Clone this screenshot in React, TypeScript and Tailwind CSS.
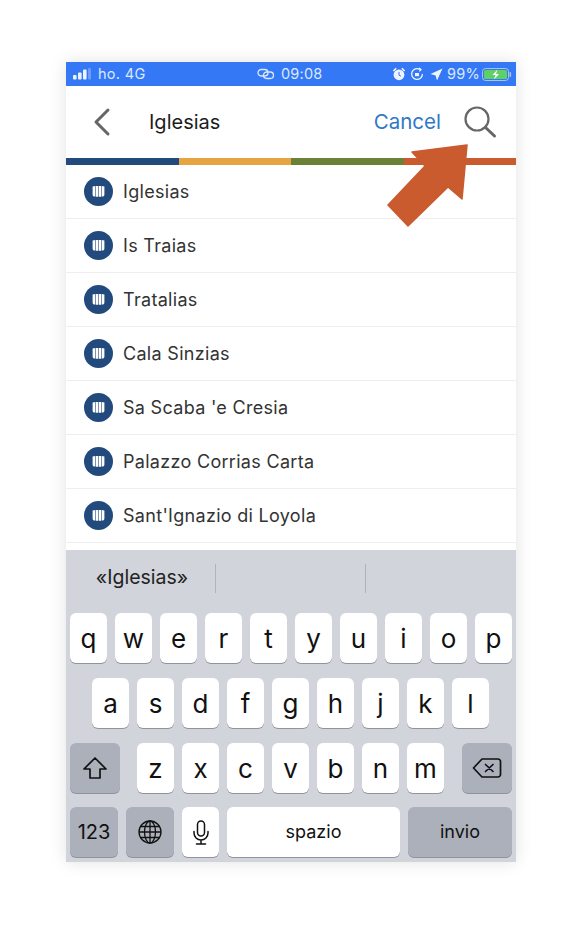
import type { ReactNode } from "react";

const places = [
  "Iglesias",
  "Is Traias",
  "Tratalias",
  "Cala Sinzias",
  "Sa Scaba 'e Cresia",
  "Palazzo Corrias Carta",
  "Sant'Ignazio di Loyola",
];

const keyFont = "font-['Inter','Liberation_Sans',sans-serif]";

const PlaceIcon = () => (
  <svg width="29" height="29" viewBox="0 0 29 29" className="shrink-0">
    <circle cx="14.5" cy="14.5" r="14.5" fill="#234a7c" />
    <path
      d="M8.6 9.6c.8-.3 1.7-.5 2.6-.6v10.6c-1.5 0-2.6-.7-2.6-2.2zM11.8 9h2.4v10.8h-2.4zM14.8 9h2.4v10.8h-2.4zM17.8 9c.9.1 1.8.3 2.6.6v7.8c0 1.5-1.1 2.2-2.6 2.2z"
      fill="#fff"
    />
  </svg>
);

const Key = ({
  label,
  className = "w-[37px] bg-white",
  children,
}: {
  label?: string;
  className?: string;
  children?: ReactNode;
}) => (
  <div
    className={`h-[50px] shrink-0 rounded-[6px] shadow-[0_1px_0_#8f949c] flex items-center justify-center text-[26px] text-[#111] ${keyFont} ${className}`}
  >
    {label}
    {children}
  </div>
);

const StatusBar = () => (
  <div className="h-6 bg-[#3478f6] flex items-center pl-[7px] text-[14.5px] text-[#dce8fd] font-['Inter','Liberation_Sans',sans-serif]">
    <svg width="20" height="12" viewBox="0 0 20 12" fill="#eef4ff">
      <rect x="0" y="7" width="3.6" height="4.5" rx="1" />
      <rect x="5" y="4.5" width="3.6" height="7" rx="1" />
      <rect x="10" y="1.5" width="3.6" height="10" rx="1" />
      <rect x="15" y="0" width="3" height="11.5" rx="1" opacity=".3" />
    </svg>
    <span className="ml-[5px] w-[50px] tracking-[0.3px]">ho. 4G</span>
    <svg width="18" height="12" viewBox="0 0 18 12" fill="none" stroke="#dce8fd" strokeWidth="1.3" className="ml-[109px]">
      <rect x="1" y="1.5" width="10" height="6.5" rx="3.2" />
      <rect x="6.5" y="4" width="10" height="6.5" rx="3.2" />
    </svg>
    <span className="ml-[6px] w-[40px] tracking-[0.2px]">09:08</span>
    <svg width="14" height="14" viewBox="0 0 14 14" fill="#eef4ff" className="ml-[71px]">
      <circle cx="7" cy="7.8" r="5.4" />
      <path d="M.8 3.6 3.6.8l1.2 1L2 4.6zM13.2 3.6 10.4.8l-1.2 1L12 4.6z" />
      <path d="M7 5v3.2l2 1" stroke="#3478f6" strokeWidth="1" fill="none" />
    </svg>
    <svg width="14" height="14" viewBox="0 0 14 14" fill="none" stroke="#eef4ff" strokeWidth="1.3" className="ml-[4px]">
      <path d="M12.4 7A5.4 5.4 0 1 1 10 2.5" />
      <path d="M9 1l2 1.6-1.6 1.8" />
      <rect x="5" y="6" width="4" height="3.2" fill="#eef4ff" stroke="none" />
    </svg>
    <svg width="13" height="13" viewBox="0 0 13 13" fill="#eef4ff" className="ml-[6px]">
      <path d="M12.5.5 7 12.5 5.6 7.4.5 6z" />
    </svg>
    <span className="ml-[4px] tracking-[0.2px]">99%</span>
    <svg width="30" height="13" viewBox="0 0 30 13" className="ml-[2px]">
      <rect x=".5" y=".5" width="26" height="12" rx="3" fill="none" stroke="#a9c6d8" />
      <rect x="2" y="2" width="23" height="9" rx="1.5" fill="#5fd068" />
      <rect x="27.5" y="4" width="1.6" height="5" rx=".8" fill="#a9c6d8" />
      <path d="M15.5 1.5 10.5 7h3L12 11.5 17 6h-3z" fill="#fff" />
    </svg>
  </div>
);

const Header = () => (
  <div className="h-[72px] bg-white flex items-center font-['Inter','Liberation_Sans',sans-serif]">
    <svg width="20" height="30" viewBox="0 0 20 30" fill="none" stroke="#666" strokeWidth="3" strokeLinecap="round" strokeLinejoin="round" className="ml-[26px]">
      <path d="M16 3 4 15l12 12" />
    </svg>
    <span className="ml-[37px] text-[20px] text-[#1c1c1c]">Iglesias</span>
    <span className="ml-auto text-[20.5px] text-[#2f78c8]">Cancel</span>
    <svg width="34" height="34" viewBox="0 0 34 34" fill="none" stroke="#666" strokeLinecap="round" className="ml-[22px] mr-[19px]">
      <circle cx="14" cy="14" r="11.5" strokeWidth="2.2" />
      <path d="m22.5 22.5 9 8.5" strokeWidth="3" />
    </svg>
  </div>
);

const ColorBar = () => (
  <div className="h-[7px] flex">
    <div className="flex-1 bg-[#234a7c]" />
    <div className="flex-1 bg-[#e5a642]" />
    <div className="flex-1 bg-[#6b8138]" />
    <div className="flex-1 bg-[#c95b2e]" />
  </div>
);

const PlaceList = () => (
  <div className="h-[385px] overflow-hidden bg-white">
    {places.map((p) => (
      <div key={p} className="h-[54px] flex items-center pl-[18px] border-b border-[#eeeeee]">
        <PlaceIcon />
        <span className="ml-[10px] text-[18px] tracking-[0.3px] text-[#333] font-['Inter','Liberation_Sans',sans-serif]">{p}</span>
      </div>
    ))}
  </div>
);

const Keyboard = () => (
  <div className="h-[312px] bg-[#d1d4db] px-1">
    <div className={`h-[63px] flex items-center pb-[7px] text-[19.5px] text-[#222] ${keyFont}`}>
      <span className="w-[145px] text-center pr-[1px]">«Iglesias»</span>
      <div className="w-px h-[29px] bg-[#b0b3ba]" />
      <div className="w-px h-[29px] bg-[#b0b3ba] ml-[149px]" />
    </div>
    <div className="flex gap-2">
      {"qwertyuiop".split("").map((k) => (
        <Key key={k} label={k} />
      ))}
    </div>
    <div className="flex gap-2 mt-[15px] pl-[22px]">
      {"asdfghjkl".split("").map((k) => (
        <Key key={k} label={k} />
      ))}
    </div>
    <div className="flex gap-2 mt-[15px]">
      <Key className="w-[50px] bg-[#abb0ba] mr-[9px]">
        <svg width="26" height="24" viewBox="0 0 26 24" fill="none" stroke="#111" strokeWidth="1.7" strokeLinejoin="round">
          <path d="M13 2 2 13h6v9h10v-9h6z" />
        </svg>
      </Key>
      {"zxcvbnm".split("").map((k) => (
        <Key key={k} label={k} />
      ))}
      <Key className="w-[50px] bg-[#abb0ba] ml-[10px]">
        <svg width="30" height="22" viewBox="0 0 30 22" fill="none" stroke="#111" strokeWidth="1.7" strokeLinejoin="round" strokeLinecap="round">
          <path d="M10 2h16a2.500 2.500 0 0 1 2.500 2.500v13A2.500 2.500 0 0 1 26 20H10L1.500 11z" />
          <path d="m13.500 7.500 7.500 7M21 7.500l-7.500 7" />
        </svg>
      </Key>
    </div>
    <div className="flex gap-2 mt-[14px]">
      <Key className="w-[48px] bg-[#abb0ba] !text-[20px]" label="123" />
      <Key className="w-[48px] bg-[#abb0ba]">
        <svg width="24" height="24" viewBox="0 0 24 24" fill="none" stroke="#111" strokeWidth="1.3">
          <circle cx="12" cy="12" r="11" />
          <ellipse cx="12" cy="12" rx="5.5" ry="11" />
          <path d="M12 1v22M1 12h22M2.600 6.500h18.800M2.600 17.500h18.800" />
        </svg>
      </Key>
      <Key className="w-[37px] bg-white">
        <svg width="16" height="25" viewBox="0 0 16 25" fill="none" stroke="#111" strokeWidth="1.5" strokeLinecap="round">
          <rect x="4.500" y="1" width="7" height="15" rx="3.500" />
          <path d="M1 11.500v1.500a7 7 0 0 0 14 0v-1.500M8 20v3.500M3.500 24h9" />
        </svg>
      </Key>
      <Key className="w-[173px] bg-white !text-[18px] pb-[2px]" label="spazio" />
      <Key className="w-[104px] bg-[#abb0ba] !text-[18px] pb-[2px]" label="invio" />
    </div>
  </div>
);

export default function App() {
  return (
    <div className="min-h-[932px] bg-white pt-[62px] pl-[66px]">
      <div className="relative w-[450px] h-[800px] shadow-[0_0_16px_rgba(0,0,0,0.12)]">
        <StatusBar />
        <Header />
        <ColorBar />
        <PlaceList />
        <Keyboard />
        {/* freccia sopra l'header */}
        <svg width="90" height="92" viewBox="0 0 90 92" className="absolute left-[321px] top-[82px]">
          <path d="M80 1 25 8l13 14L1 61l20 21 40-39 14 12z" fill="#c95b2e" stroke="#c95b2e" strokeWidth="1.5" strokeLinejoin="round" />
        </svg>
      </div>
    </div>
  );
}
